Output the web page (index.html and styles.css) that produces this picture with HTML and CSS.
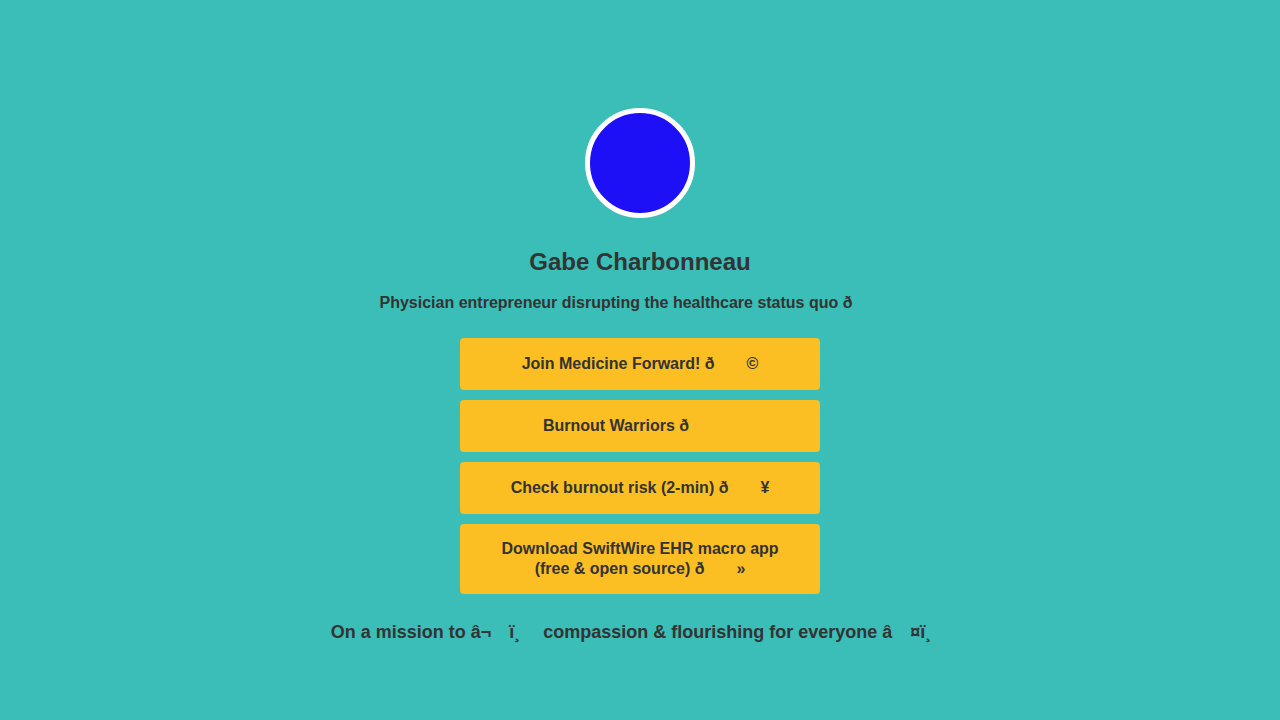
FILE: index.html
```html
<!DOCTYPE html>
<html lang="en">
<head>
<meta charset="utf-8">
<title>Gabe Charbonneau</title>
<link rel="stylesheet" href="styles.css">
</head>
<body>
<main class="page">
  <div class="avatar"></div>
  <h1 class="name">Gabe Charbonneau</h1>
  <p class="bio">Physician entrepreneur disrupting the healthcare status quo ð<span class="c"></span><span class="c"></span><span class="c"></span></p>
  <nav class="links">
    <a class="link" href="#"><span class="label">Join Medicine Forward! ð<span class="c"></span><span class="c"></span>©</span></a>
    <a class="link" href="#"><span class="label">Burnout Warriors ð<span class="c"></span><span class="c"></span><span class="c"></span></span></a>
    <a class="link" href="#"><span class="label">Check burnout risk (2-min) ð<span class="c"></span><span class="c"></span>¥</span></a>
    <a class="link" href="#"><span class="label">Download SwiftWire EHR macro app (free &amp; open source) ð<span class="c"></span><span class="c"></span>»</span></a>
  </nav>
  <p class="mission">On a mission to â¬<span class="c"></span>ï¸<span class="c"></span> compassion &amp; flourishing for everyone â<span class="c"></span>¤ï¸<span class="c"></span></p>
</main>
</body>
</html>
```
FILE: styles.css
```css
html, body {
  margin: 0;
  padding: 0;
}
body {
  background: #3abeb7;
  color: #333333;
  font-family: "Liberation Sans", Arial, sans-serif;
  font-weight: bold;
  height: 720px;
}
.page {
  display: flex;
  flex-direction: column;
  align-items: center;
  padding-top: 108px;
  text-align: center;
}
.avatar {
  width: 100px;
  height: 100px;
  border-radius: 50%;
  border: 5px solid #ffffff;
  background: #1e10f6;
}
.name {
  margin: 30px 0 0;
  font-size: 24px;
  line-height: 28px;
  font-weight: bold;
}
.bio {
  margin: 17px 0 0;
  font-size: 16px;
  line-height: 20px;
}
.c {
  display: inline-block;
  width: 1em;
}
.links {
  margin-top: 25px;
  display: flex;
  flex-direction: column;
  gap: 10px;
  width: 360px;
}
.link {
  display: flex;
  align-items: center;
  justify-content: center;
  background: #fbbf24;
  color: #333333;
  text-decoration: none;
  border-radius: 4px;
  padding: 15px 24px;
  min-height: 22px;
  font-size: 16px;
  line-height: 20px;
}
.label {
  display: block;
  text-align: center;
}
.mission {
  margin: 27px 0 0;
  font-size: 18px;
  line-height: 22px;
}
```
